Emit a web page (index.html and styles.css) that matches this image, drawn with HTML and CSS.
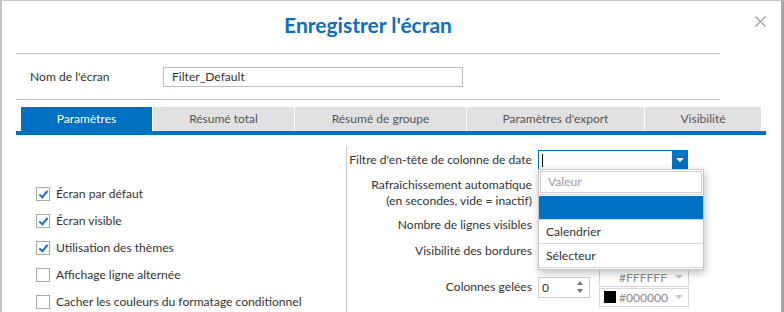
FILE: index.html
```html
<!DOCTYPE html>
<html>
<head>
    <title>Enregistrer l'écran</title>
    <link rel="stylesheet" href="styles.css">
</head>
<body>
    <div class="dialog">
        <div class="header">
            <h1 class="title">Enregistrer l'écran</h1>
            <svg class="close" width="11" height="11" viewBox="0 0 11 11">
                <path d="M0.5 0.5 L10.5 10.5 M10.5 0.5 L0.5 10.5" stroke="#9a9a9a" stroke-width="1.2" fill="none"/>
            </svg>
        </div>

        <div class="name-row">
            <label class="name-label">Nom de l'écran</label>
            <div class="name-input">Filter_Default</div>
        </div>

        <div class="tabs">
            <div class="tab active" style="width: 131px">Paramètres</div>
            <div class="tab" style="width: 141px">Résumé total</div>
            <div class="tab" style="width: 171px">Résumé de groupe</div>
            <div class="tab" style="width: 177px">Paramètres d'export</div>
            <div class="tab" style="width: 116px">Visibilité</div>
        </div>

        <div class="panel">
            <div class="left-col">
                <div class="check-row"><span class="box checked"></span>Écran par défaut</div>
                <div class="check-row"><span class="box checked"></span>Écran visible</div>
                <div class="check-row"><span class="box checked"></span>Utilisation des thèmes</div>
                <div class="check-row"><span class="box"></span>Affichage ligne alternée</div>
                <div class="check-row"><span class="box"></span>Cacher les couleurs du formatage conditionnel</div>
            </div>

            <div class="right-col">
                <div class="field row-date">
                    <div class="field-label">Filtre d'en-tête de colonne de date</div>
                    <div class="combo">
                        <div class="combo-input"><span class="caret"></span></div>
                        <div class="combo-btn"><span class="arrow-white"></span></div>
                        <div class="popup">
                            <div class="popup-search"><div class="search-box">Valeur</div></div>
                            <div class="popup-item selected"></div>
                            <div class="popup-item">Calendrier</div>
                            <div class="popup-item">Sélecteur</div>
                        </div>
                    </div>
                </div>
                <div class="field row-refresh">
                    <div class="field-label">Rafraîchissement automatique<br>(en secondes, vide = inactif)</div>
                    <div class="plain-input"></div>
                </div>
                <div class="field row-small">
                    <div class="field-label">Nombre de lignes visibles</div>
                    <div class="plain-input"></div>
                </div>
                <div class="field row-small">
                    <div class="field-label">Visibilité des bordures</div>
                    <div class="plain-input"></div>
                </div>
                <div class="field row-frozen">
                    <div class="field-label">Colonnes gelées</div>
                    <div class="spinner">
                        <span>0</span>
                        <div class="spin-arrows">
                            <span class="up"></span>
                            <span class="down"></span>
                        </div>
                    </div>
                    <div class="colors">
                        <div class="color-pick">
                            <span class="swatch white"></span><span class="color-text">#FFFFFF</span><span class="arrow-gray"></span>
                        </div>
                        <div class="color-pick">
                            <span class="swatch black"></span><span class="color-text">#000000</span><span class="arrow-gray"></span>
                        </div>
                    </div>
                </div>
            </div>
        </div>
    </div>
</body>
</html>
```

FILE: styles.css
```css
body {
    margin: 0;
    font-family: Lato, "Noto Sans", sans-serif;
    font-size: 12.1px;
    color: #333;
    background: #fff;
}

.dialog {
    width: 784px;
    height: 312px;
    box-sizing: border-box;
    border-top: 1px solid #c4c4c4;
    border-left: 2px solid #c4c4c4;
    border-right: 3px solid #a6a6a6;
    overflow: hidden;
    position: relative;
}

.header {
    margin-left: 14px;
    width: 704px;
    height: 52px;
    border-bottom: 1px solid #c0c0c0;
    display: flex;
    justify-content: center;
    align-items: center;
}

.title {
    margin: 0 0 6px 0;
    font-size: 21px;
    font-weight: bold;
    color: #0a6fc2;
}

.close {
    position: absolute;
    top: 15px;
    right: 15px;
}

.name-row {
    margin-left: 14px;
    width: 704px;
    height: 45px;
    border-bottom: 1px solid #c0c0c0;
    display: flex;
    align-items: center;
}

.name-label {
    width: 133px;
    padding-left: 14px;
}

.name-input {
    width: 290px;
    height: 18px;
    border: 1px solid #bdbdbd;
    padding-left: 8px;
    line-height: 18px;
}

.tabs {
    margin: 7px 0 0 14px;
    width: 745px;
    padding-left: 5px;
    display: flex;
    gap: 1px;
    border-bottom: 4px solid #0070c0;
}

.tab {
    height: 24px;
    line-height: 24px;
    text-align: center;
    background: #e1e1e1;
    color: #555;
    font-size: 12px;
}

.tab.active {
    background: #0070c0;
    color: #fff;
}

.panel {
    display: flex;
    height: 200px;
}

.left-col {
    width: 330px;
    margin-left: 14px;
    padding-top: 45px;
}

.check-row {
    height: 27px;
    display: flex;
    align-items: center;
    padding-left: 20px;
    white-space: nowrap;
}

.box {
    width: 12px;
    height: 12px;
    border: 1px solid #ababab;
    margin-right: 6px;
    position: relative;
}

.box.checked::after {
    content: "";
    position: absolute;
    left: 4px;
    top: 1px;
    width: 3px;
    height: 7px;
    border-right: 2px solid #1a6fc2;
    border-bottom: 2px solid #1a6fc2;
    transform: rotate(40deg);
}

.right-col {
    margin-top: 11px;
    border-left: 1px solid #c8c8c8;
    padding-top: 4px;
    width: 420px;
}

.field {
    display: flex;
    align-items: center;
}

.field-label {
    width: 185px;
    text-align: right;
    margin-right: 6px;
    line-height: 16px;
    white-space: nowrap;
}

.row-date {
    height: 20px;
}

.row-refresh {
    height: 32px;
    margin-top: 7px;
}

.row-small {
    height: 20px;
    margin-top: 6px;
}

.row-frozen {
    height: 40px;
    margin-top: 6px;
}

.combo {
    position: relative;
    display: flex;
    width: 150px;
    height: 20px;
}

.combo-input {
    flex: 1;
    border: 1px solid #0070c0;
    border-right: none;
    background: #fff;
    position: relative;
}

.caret {
    position: absolute;
    left: 3px;
    top: 3px;
    width: 1px;
    height: 13px;
    background: #000;
}

.combo-btn {
    width: 16px;
    background: #0070c0;
    display: flex;
    align-items: center;
    justify-content: center;
}

.arrow-white {
    border-left: 4px solid transparent;
    border-right: 4px solid transparent;
    border-top: 4px solid #fff;
}

.popup {
    position: absolute;
    top: 19px;
    left: 0;
    width: 164px;
    background: #fff;
    border: 1px solid #c6c6c6;
    box-shadow: 1px 3px 8px rgba(0, 0, 0, 0.25);
    z-index: 2;
    padding-bottom: 1px;
}

.popup-search {
    padding: 1px;
    border-bottom: 1px solid #d8d8d8;
}

.search-box {
    height: 20px;
    line-height: 20px;
    border: 1px solid #d0d0d0;
    padding-left: 7px;
    color: #9a9a9a;
}

.popup-item {
    height: 23px;
    line-height: 23px;
    padding-left: 7px;
    border-bottom: 1px solid #d8d8d8;
}

.popup-item.selected {
    background: #0070c0;
    margin-top: 1px;
}

.plain-input {
    width: 148px;
    height: 18px;
    border: 1px solid #cfcfcf;
}

.spinner {
    width: 47px;
    height: 19px;
    border: 1px solid #cfcfcf;
    display: flex;
    align-items: center;
    justify-content: space-between;
    padding-left: 3px;
}

.spin-arrows {
    display: flex;
    flex-direction: column;
    gap: 4px;
    margin-right: 6px;
}

.spin-arrows .up {
    border-left: 3px solid transparent;
    border-right: 3px solid transparent;
    border-bottom: 4px solid #777;
}

.spin-arrows .down {
    border-left: 3px solid transparent;
    border-right: 3px solid transparent;
    border-top: 4px solid #777;
}

.colors {
    margin-left: 9px;
    display: flex;
    flex-direction: column;
    gap: 1px;
}

.color-pick {
    width: 84px;
    height: 17px;
    border: 1px solid #d6d6d6;
    display: flex;
    align-items: center;
    padding-left: 4px;
}

.swatch {
    width: 12px;
    height: 12px;
    margin-right: 3px;
}

.swatch.white {
    background: #fff;
}

.swatch.black {
    background: #000;
}

.color-text {
    flex: 1;
    color: #8a8a8a;
}

.arrow-gray {
    border-left: 4px solid transparent;
    border-right: 4px solid transparent;
    border-top: 4px solid #c8c8c8;
    margin-right: 5px;
}
```
